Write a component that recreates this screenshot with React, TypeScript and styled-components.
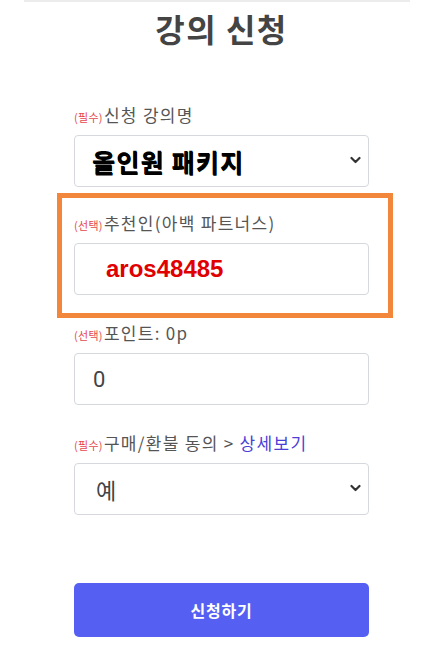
import React from "react";
import styled, { createGlobalStyle } from "styled-components";

const Global = createGlobalStyle`
  html, body { margin: 0; padding: 0; background: #fff; }
  body { font-family: "Noto Sans CJK KR", "Noto Sans", sans-serif; }
  * { box-sizing: border-box; }
`;

const Page = styled.div`
  width: 425px;
  height: 646px;
  overflow: hidden;
  padding: 0 15px 0 24px;
`;

const Frame = styled.div`
  border-top: 2px solid #ececec;
  padding-left: 50px;
  width: 386px;
`;

const Column = styled.div`
  width: 295px;
  display: flex;
  flex-direction: column;
`;

const Title = styled.h1`
  margin: 6px 0 0;
  height: 40px;
  line-height: 40px;
  font-size: 32px;
  font-weight: 700;
  color: #444;
  text-align: center;
  letter-spacing: 1.5px;
`;

const Field = styled.div<{ $top: number }>`
  margin-top: ${(p) => p.$top}px;
  display: flex;
  flex-direction: column;
  gap: 10px;
`;

const Highlight = styled.div`
  margin: 6px -24px 0 -17px;
  border: 5px solid #f2873b;
  padding: 15px 19px 18px 12px;
`;

const Label = styled.div`
  height: 20px;
  line-height: 20px;
  font-size: 17px;
  letter-spacing: 1.3px;
  color: #555;
  white-space: nowrap;
`;

const Tag = styled.span`
  font-size: 11px;
  letter-spacing: 0.3px;
  color: #e5484d;
  margin-right: 1px;
`;

const Link = styled.span`
  color: #4b3fd6;
`;

const ControlWrap = styled.div`
  position: relative;
  width: 295px;
`;

const Select = styled.select<{ $big?: boolean; $pad: number }>`
  appearance: none;
  -webkit-appearance: none;
  width: 100%;
  height: 52px;
  border: 1px solid #d5d8dd;
  border-radius: 4px;
  background: #fff;
  padding-left: ${(p) => p.$pad}px;
  font-family: "Noto Sans CJK KR", "Noto Sans", sans-serif;
  font-size: ${(p) => (p.$big ? 25 : 22)}px;
  letter-spacing: ${(p) => (p.$big ? 1.2 : 0)}px;
  font-weight: ${(p) => (p.$big ? 700 : 400)};
  color: ${(p) => (p.$big ? "#000" : "#444")};
  text-shadow: ${(p) => (p.$big ? "0.5px 0.5px 0 #000" : "none")};
  outline: none;
`;

const Chevron = styled.svg`
  position: absolute;
  right: 8px;
  top: 21px;
  width: 11px;
  height: 8px;
  pointer-events: none;
`;

const Input = styled.input<{ $pad: number; $accent?: boolean }>`
  width: 100%;
  height: 52px;
  border: 1px solid #d5d8dd;
  border-radius: 4px;
  background: #fff;
  padding-left: ${(p) => p.$pad}px;
  font-family: ${(p) =>
    p.$accent ? '"Liberation Sans", Arial, sans-serif' : '"Roboto", "Noto Sans", sans-serif'};
  font-size: ${(p) => (p.$accent ? 24 : 22)}px;
  font-weight: ${(p) => (p.$accent ? 700 : 400)};
  color: ${(p) => (p.$accent ? "#e00000" : "#444")};
  outline: none;
`;

const Submit = styled.button`
  margin-top: 68px;
  width: 295px;
  height: 54px;
  border: none;
  border-radius: 5px;
  background: #5560f2;
  color: #fff;
  font-family: "Noto Sans CJK KR", "Noto Sans", sans-serif;
  font-size: 16px;
  letter-spacing: 0.8px;
  font-weight: 700;
`;

const ChevronIcon = () => (
  <Chevron viewBox="0 0 11 8">
    <path d="M1.5 2 L5.5 6 L9.5 2" fill="none" stroke="#333" strokeWidth="2.2" strokeLinecap="round" strokeLinejoin="round" />
  </Chevron>
);

export default function App() {
  return (
    <Page>
      <Global />
      <Frame>
        <Column>
          <Title>강의 신청</Title>

          <Field $top={57}>
            <Label>
              <Tag>(필수)</Tag>신청 강의명
            </Label>
            <ControlWrap>
              <Select $big $pad={17} defaultValue="all">
                <option value="all">올인원 패키지</option>
              </Select>
              <ChevronIcon />
            </ControlWrap>
          </Field>

          <Highlight>
            <Field $top={0}>
              <Label>
                <Tag>(선택)</Tag>추천인(아백 파트너스)
              </Label>
              <ControlWrap>
                <Input $accent $pad={31} defaultValue="aros48485" readOnly />
              </ControlWrap>
            </Field>
          </Highlight>

          <Field $top={5}>
            <Label>
              <Tag>(선택)</Tag>포인트: 0p
            </Label>
            <ControlWrap>
              <Input $pad={18} defaultValue="0" readOnly />
            </ControlWrap>
          </Field>

          <Field $top={28}>
            <Label>
              <Tag>(필수)</Tag>구매/환불 동의 &gt; <Link>상세보기</Link>
            </Label>
            <ControlWrap>
              <Select $pad={21} defaultValue="yes">
                <option value="yes">예</option>
              </Select>
              <ChevronIcon />
            </ControlWrap>
          </Field>

          <Submit type="button">신청하기</Submit>
        </Column>
      </Frame>
    </Page>
  );
}
